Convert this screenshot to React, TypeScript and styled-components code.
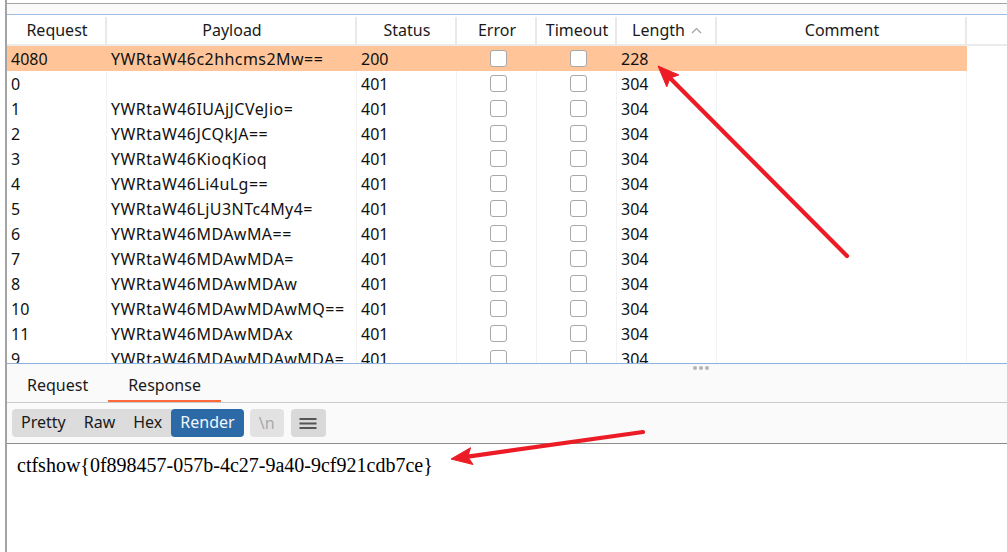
import React from 'react';
import styled, { createGlobalStyle } from 'styled-components';

const COLS = '100px 250px 100px 80px 80px 100px 250px 1fr';

const Global = createGlobalStyle`
  html, body { margin: 0; padding: 0; background: #fff; }
  body { font-family: "Noto Sans", "Open Sans", sans-serif; color: #111; }
  * { box-sizing: border-box; }
`;

const Screen = styled.div`
  position: relative;
  width: 1007px;
  height: 552px;
  overflow: hidden;
  background: #fff;
  padding-left: 5px;
`;

const Frame = styled.div`
  height: 100%;
  border-left: 2px solid #a3a3a3;
  display: flex;
  flex-direction: column;
`;

const TopStrip = styled.div`
  flex: 0 0 auto;
  margin-top: 3px;
  height: 12px;
  border-top: 1px solid #a5a5a5;
  border-bottom: 1px solid #9ebfe5;
  background: #fafafa;
`;

const HeaderRow = styled.div`
  flex: 0 0 auto;
  display: grid;
  grid-template-columns: ${COLS};
  height: 31px;
  border-bottom: 2px solid #ebebeb;
  background: #fff;
`;

const HeaderCell = styled.div<{ $sep?: boolean }>`
  position: relative;
  display: flex;
  align-items: center;
  justify-content: center;
  gap: 6px;
  padding-top: 1px;
  font-size: 16px;
  color: #1a1a1a;
  &::after {
    content: '';
    display: ${(p) => (p.$sep ? 'block' : 'none')};
    position: absolute;
    right: 0;
    top: 2px;
    bottom: 0;
    width: 2px;
    background: #e9e9e9;
  }
`;

const Body = styled.div`
  flex: 0 0 317px;
  overflow: hidden;
`;

const Row = styled.div`
  display: grid;
  grid-template-columns: ${COLS};
  height: 25px;
`;

const Cell = styled.div<{ $sel?: boolean; $last?: boolean; $center?: boolean; $wide?: boolean }>`
  display: flex;
  align-items: center;
  justify-content: ${(p) => (p.$center ? 'center' : 'flex-start')};
  padding-left: ${(p) => (p.$center ? '0' : '4px')};
  padding-top: ${(p) => (p.$center ? '0' : '2px')};
  font-size: 16px;
  letter-spacing: ${(p) => (p.$wide ? '0.45px' : '0')};
  line-height: 23px;
  white-space: nowrap;
  overflow: hidden;
  color: #111;
  background: ${(p) => (p.$sel && !p.$last ? '#ffc599' : '#fff')};
  border-right: 1px solid ${(p) => (p.$last ? 'transparent' : p.$sel ? '#ffc599' : '#f2f2f2')};
`;

const Check = styled.span`
  display: block;
  width: 17px;
  height: 17px;
  margin-left: 3px;
  border: 1.5px solid #a8a8a8;
  border-radius: 3px;
  background: #fff;
`;

const BottomPane = styled.div`
  position: relative;
  flex: 1 1 auto;
  display: flex;
  flex-direction: column;
  border-top: 1px solid #8fb1db;
`;

const Handle = styled.div`
  position: absolute;
  top: 2px;
  left: 686px;
  display: flex;
  gap: 2px;
  & > span {
    width: 4px;
    height: 4px;
    border-radius: 50%;
    background: #b4b4b4;
  }
`;

const TabBar = styled.div`
  flex: 0 0 39px;
  display: flex;
  background: #fafafa;
  border-bottom: 1px solid #c6cbcb;
`;

const Tab = styled.div<{ $active?: boolean }>`
  display: flex;
  align-items: center;
  padding: 5px 20px 0;
  font-size: 16px;
  color: #1a1a1a;
  border-bottom: 2px solid ${(p) => (p.$active ? '#ff6a3d' : 'transparent')};
`;

const Toolbar = styled.div`
  flex: 0 0 41px;
  display: flex;
  align-items: center;
  padding-left: 5px;
  background: #fafafa;
  border-bottom: 1px solid #8c8c8c;
`;

const Group = styled.div`
  display: flex;
  height: 28px;
  background: #dcdcdc;
  border-radius: 4px;
`;

const ModeBtn = styled.div<{ $active?: boolean }>`
  display: flex;
  align-items: center;
  padding: 0 9px 2px;
  font-size: 16px;
  border-radius: 4px;
  color: ${(p) => (p.$active ? '#f2f6fa' : '#1a1a1a')};
  background: ${(p) => (p.$active ? '#2b6aa7' : 'transparent')};
`;

const IconBtn = styled.div<{ $disabled?: boolean; $gap: number; $w: number }>`
  display: flex;
  align-items: center;
  justify-content: center;
  margin-left: ${(p) => p.$gap}px;
  width: ${(p) => p.$w}px;
  height: 28px;
  border-radius: 4px;
  font-size: 16px;
  color: ${(p) => (p.$disabled ? '#a9a9a9' : '#444')};
  background: ${(p) => (p.$disabled ? '#e2e2e2' : '#d9d9d9')};
`;

const Content = styled.div`
  flex: 1 1 auto;
  background: #fff;
  padding: 10px 10px;
`;

const Flag = styled.div`
  font-family: "Liberation Serif", "Times New Roman", serif;
  font-size: 20px;
  color: #000;
`;

const Overlay = styled.svg`
  position: absolute;
  left: 0;
  top: 0;
  pointer-events: none;
`;

type R = { id: string; payload: string; status: string; length: string; sel?: boolean };

const rows: R[] = [
  { id: '4080', payload: 'YWRtaW46c2hhcms2Mw==', status: '200', length: '228', sel: true },
  { id: '0', payload: '', status: '401', length: '304' },
  { id: '1', payload: 'YWRtaW46IUAjJCVeJio=', status: '401', length: '304' },
  { id: '2', payload: 'YWRtaW46JCQkJA==', status: '401', length: '304' },
  { id: '3', payload: 'YWRtaW46KioqKioq', status: '401', length: '304' },
  { id: '4', payload: 'YWRtaW46Li4uLg==', status: '401', length: '304' },
  { id: '5', payload: 'YWRtaW46LjU3NTc4My4=', status: '401', length: '304' },
  { id: '6', payload: 'YWRtaW46MDAwMA==', status: '401', length: '304' },
  { id: '7', payload: 'YWRtaW46MDAwMDA=', status: '401', length: '304' },
  { id: '8', payload: 'YWRtaW46MDAwMDAw', status: '401', length: '304' },
  { id: '10', payload: 'YWRtaW46MDAwMDAwMQ==', status: '401', length: '304' },
  { id: '11', payload: 'YWRtaW46MDAwMDAx', status: '401', length: '304' },
  { id: '9', payload: 'YWRtaW46MDAwMDAwMDA=', status: '401', length: '304' },
];

const headers = ['Request', 'Payload', 'Status', 'Error', 'Timeout', 'Length', 'Comment'];

function Arrow({ x1, y1, x2, y2 }: { x1: number; y1: number; x2: number; y2: number }) {
  const dx = x2 - x1;
  const dy = y2 - y1;
  const len = Math.hypot(dx, dy);
  const ux = dx / len;
  const uy = dy / len;
  const px = -uy;
  const py = ux;
  const hl = 21;
  const hw = 8.5;
  const bx = x2 - ux * hl;
  const by = y2 - uy * hl;
  const nx = x2 - ux * (hl - 4);
  const ny = y2 - uy * (hl - 4);
  const pts = [
    [x2, y2],
    [bx + px * hw, by + py * hw],
    [nx, ny],
    [bx - px * hw, by - py * hw],
  ]
    .map((p) => p.join(','))
    .join(' ');
  return (
    <g fill="#ec1c26" stroke="#ec1c26">
      <line x1={x1} y1={y1} x2={nx} y2={ny} strokeWidth={4.2} strokeLinecap="round" />
      <polygon points={pts} strokeWidth={1} strokeLinejoin="round" />
    </g>
  );
}

export default function App() {
  return (
    <Screen>
      <Global />
      <Frame>
        <TopStrip />
        <HeaderRow>
          {headers.map((h) => (
            <HeaderCell key={h} $sep>
              {h}
              {h === 'Length' && (
                <svg width="11" height="7" viewBox="0 0 11 7">
                  <path d="M1 6 L5.5 1.5 L10 6" fill="none" stroke="#a0a0a0" strokeWidth="1.2" />
                </svg>
              )}
            </HeaderCell>
          ))}
          <HeaderCell />
        </HeaderRow>
        <Body>
          {rows.map((r) => (
            <Row key={r.id}>
              <Cell $sel={r.sel}>{r.id}</Cell>
              <Cell $sel={r.sel} $wide>{r.payload}</Cell>
              <Cell $sel={r.sel}>{r.status}</Cell>
              <Cell $sel={r.sel} $center>
                <Check />
              </Cell>
              <Cell $sel={r.sel} $center>
                <Check />
              </Cell>
              <Cell $sel={r.sel}>{r.length}</Cell>
              <Cell $sel={r.sel} />
              <Cell $sel={r.sel} $last />
            </Row>
          ))}
        </Body>
        <BottomPane>
          <Handle>
            <span />
            <span />
            <span />
          </Handle>
          <TabBar>
            <Tab>Request</Tab>
            <Tab $active>Response</Tab>
          </TabBar>
          <Toolbar>
            <Group>
              <ModeBtn>Pretty</ModeBtn>
              <ModeBtn>Raw</ModeBtn>
              <ModeBtn>Hex</ModeBtn>
              <ModeBtn $active>Render</ModeBtn>
            </Group>
            <IconBtn $disabled $gap={6} $w={34}>\n</IconBtn>
            <IconBtn $gap={7} $w={35}>
              <svg width="18" height="14" viewBox="0 0 18 14">
                <rect x="0.5" y="2" width="17" height="2" fill="#555" />
                <rect x="0.5" y="6.5" width="17" height="2" fill="#555" />
                <rect x="0.5" y="11" width="17" height="2" fill="#555" />
              </svg>
            </IconBtn>
          </Toolbar>
          <Content>
            <Flag>ctfshow{'{'}0f898457-057b-4c27-9a40-9cf921cdb7ce{'}'}</Flag>
          </Content>
        </BottomPane>
      </Frame>
      <Overlay width="1007" height="552" viewBox="0 0 1007 552">
        <Arrow x1={847} y1={256} x2={658} y2={66} />
        <Arrow x1={643} y1={432} x2={451} y2={459} />
      </Overlay>
    </Screen>
  );
}
